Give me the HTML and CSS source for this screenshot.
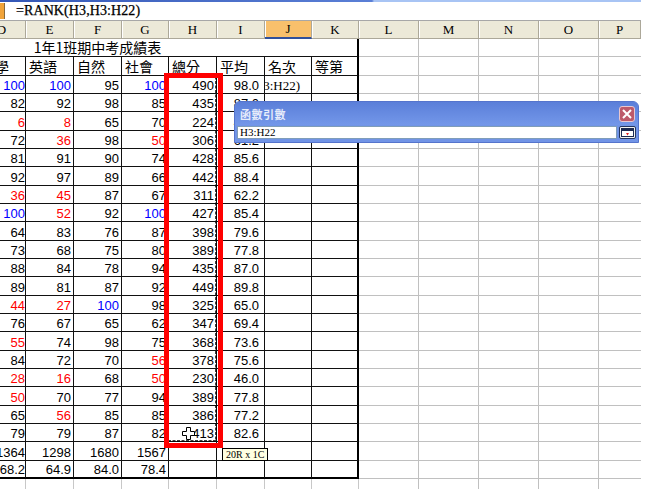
FILE: index.html
```html
<!DOCTYPE html>
<html lang="zh-Hant">
<head>
<meta charset="utf-8">
<title>RANK</title>
<link rel="stylesheet" href="styles.css">
</head>
<body>
<div class="formula-bar"><span class="fx"></span><span class="formula">=RANK(H3,H3:H22)</span></div>
<div class="sheet">
  <div class="colhead">
    <span class="h">D</span><span class="h">E</span><span class="h">F</span><span class="h">G</span><span class="h">H</span><span class="h">I</span><span class="h sel">J</span><span class="h">K</span><span class="h">L</span><span class="h">M</span><span class="h">N</span><span class="h">O</span><span class="h">P</span>
  </div>
  <div class="row"><span class="c title">1年1班期中考成績表</span><span class="c nr"></span><span class="c nr"></span><span class="c k"></span><span class="rest"></span></div>
  <div class="row"><span class="c lab">數學</span><span class="c lab">英語</span><span class="c lab">自然</span><span class="c lab">社會</span><span class="c lab">總分</span><span class="c lab">平均</span><span class="c lab">名次</span><span class="c lab k">等第</span><span class="rest"></span></div>
  <div class="row"><span class="c b">100</span><span class="c b">100</span><span class="c">95</span><span class="c b">100</span><span class="c">490</span><span class="c avg">98.0</span><span class="c edit">H3,H3:H22)</span><span class="c k"></span><span class="rest"></span></div>
  <div class="row"><span class="c">82</span><span class="c">92</span><span class="c">98</span><span class="c">85</span><span class="c">435</span><span class="c avg">87.0</span><span class="c"></span><span class="c k"></span><span class="rest"></span></div>
  <div class="row"><span class="c r">6</span><span class="c r">8</span><span class="c">65</span><span class="c">70</span><span class="c">224</span><span class="c avg">44.8</span><span class="c"></span><span class="c k"></span><span class="rest"></span></div>
  <div class="row"><span class="c">72</span><span class="c r">36</span><span class="c">98</span><span class="c r">50</span><span class="c">306</span><span class="c avg">61.2</span><span class="c"></span><span class="c k"></span><span class="rest"></span></div>
  <div class="row"><span class="c">81</span><span class="c">91</span><span class="c">90</span><span class="c">74</span><span class="c">428</span><span class="c avg">85.6</span><span class="c"></span><span class="c k"></span><span class="rest"></span></div>
  <div class="row"><span class="c">92</span><span class="c">97</span><span class="c">89</span><span class="c">66</span><span class="c">442</span><span class="c avg">88.4</span><span class="c"></span><span class="c k"></span><span class="rest"></span></div>
  <div class="row"><span class="c r">36</span><span class="c r">45</span><span class="c">87</span><span class="c">67</span><span class="c">311</span><span class="c avg">62.2</span><span class="c"></span><span class="c k"></span><span class="rest"></span></div>
  <div class="row"><span class="c b">100</span><span class="c r">52</span><span class="c">92</span><span class="c b">100</span><span class="c">427</span><span class="c avg">85.4</span><span class="c"></span><span class="c k"></span><span class="rest"></span></div>
  <div class="row"><span class="c">64</span><span class="c">83</span><span class="c">76</span><span class="c">87</span><span class="c">398</span><span class="c avg">79.6</span><span class="c"></span><span class="c k"></span><span class="rest"></span></div>
  <div class="row"><span class="c">73</span><span class="c">68</span><span class="c">75</span><span class="c">80</span><span class="c">389</span><span class="c avg">77.8</span><span class="c"></span><span class="c k"></span><span class="rest"></span></div>
  <div class="row"><span class="c">88</span><span class="c">84</span><span class="c">78</span><span class="c">94</span><span class="c">435</span><span class="c avg">87.0</span><span class="c"></span><span class="c k"></span><span class="rest"></span></div>
  <div class="row"><span class="c">89</span><span class="c">81</span><span class="c">87</span><span class="c">92</span><span class="c">449</span><span class="c avg">89.8</span><span class="c"></span><span class="c k"></span><span class="rest"></span></div>
  <div class="row"><span class="c r">44</span><span class="c r">27</span><span class="c b">100</span><span class="c">98</span><span class="c">325</span><span class="c avg">65.0</span><span class="c"></span><span class="c k"></span><span class="rest"></span></div>
  <div class="row"><span class="c">76</span><span class="c">67</span><span class="c">65</span><span class="c">62</span><span class="c">347</span><span class="c avg">69.4</span><span class="c"></span><span class="c k"></span><span class="rest"></span></div>
  <div class="row"><span class="c r">55</span><span class="c">74</span><span class="c">98</span><span class="c">75</span><span class="c">368</span><span class="c avg">73.6</span><span class="c"></span><span class="c k"></span><span class="rest"></span></div>
  <div class="row"><span class="c">84</span><span class="c">72</span><span class="c">70</span><span class="c r">56</span><span class="c">378</span><span class="c avg">75.6</span><span class="c"></span><span class="c k"></span><span class="rest"></span></div>
  <div class="row"><span class="c r">28</span><span class="c r">16</span><span class="c">68</span><span class="c r">50</span><span class="c">230</span><span class="c avg">46.0</span><span class="c"></span><span class="c k"></span><span class="rest"></span></div>
  <div class="row"><span class="c r">50</span><span class="c">70</span><span class="c">77</span><span class="c">94</span><span class="c">389</span><span class="c avg">77.8</span><span class="c"></span><span class="c k"></span><span class="rest"></span></div>
  <div class="row"><span class="c">65</span><span class="c r">56</span><span class="c">85</span><span class="c">85</span><span class="c">386</span><span class="c avg">77.2</span><span class="c"></span><span class="c k"></span><span class="rest"></span></div>
  <div class="row"><span class="c">79</span><span class="c">79</span><span class="c">87</span><span class="c">82</span><span class="c">413</span><span class="c avg">82.6</span><span class="c"></span><span class="c k"></span><span class="rest"></span></div>
  <div class="row"><span class="c">1364</span><span class="c">1298</span><span class="c">1680</span><span class="c">1567</span><span class="c"></span><span class="c"></span><span class="c"></span><span class="c k"></span><span class="rest"></span></div>
  <div class="row last"><span class="c">68.2</span><span class="c">64.9</span><span class="c">84.0</span><span class="c">78.4</span><span class="c"></span><span class="c"></span><span class="c"></span><span class="c k"></span><span class="rest"></span></div>
  <div class="row"><span class="c g"></span><span class="c g"></span><span class="c g"></span><span class="c g"></span><span class="c g"></span><span class="c g"></span><span class="c g"></span><span class="c g"></span><span class="rest"></span></div>
</div>

<svg class="ants" width="52" height="369" viewBox="0 0 52 369"><rect x="1" y="1" width="48" height="366" fill="none" stroke="#000" stroke-width="1.5" stroke-dasharray="3 1.5"/></svg>
<div class="redbox"></div>
<svg class="cursor" width="13" height="13" viewBox="0 0 13 13"><path d="M4.5 0.5H8.5V4.5H12.5V8.5H8.5V12.5H4.5V8.5H0.5V4.5H4.5Z" fill="#fff" stroke="#000" stroke-width="1"/></svg>
<div class="tip">20R x 1C</div>

<div class="dialog">
  <div class="dlg-title">
    <span class="dlg-name">函數引數</span>
    <span class="dlg-close"><svg width="10" height="10" viewBox="0 0 10 10"><path d="M1 1L9 9M9 1L1 9" stroke="#fff" stroke-width="2"/></svg></span>
  </div>
  <div class="dlg-body">
    <span class="dlg-input">H3:H22</span>
    <span class="dlg-btn"><svg width="13" height="9" viewBox="0 0 13 9"><rect x="0.5" y="0.5" width="12" height="8" fill="#fff" stroke="#1c2a52"/><rect x="1" y="1" width="11" height="2" fill="#1c2a52"/><path d="M5 5H8L6.5 7.5Z" fill="#e02020"/></svg></span>
  </div>
</div>
</body>
</html>
```
FILE: styles.css
```css
html, body {
  margin: 0;
  padding: 0;
}
body {
  width: 659px;
  height: 489px;
  overflow: hidden;
  position: relative;
  background: #fff;
  font-family: "Liberation Sans", Arial, sans-serif;
}

/* formula bar */
.formula-bar {
  height: 20px;
  width: 641px;
  box-sizing: border-box;
  display: flex;
  align-items: center;
  background: linear-gradient(to right, #3457b6 0, #5a7fd6 372px, #a8c4f4 374px, #a8c4f4 641px) top left / 100% 2px no-repeat;
}
.fx {
  width: 5px;
  height: 16px;
  margin-top: 2px;
  background: #f0a33a;
  box-shadow: inset -1px 0 #8a6a3a;
}
.formula {
  margin-left: 11px;
  margin-top: 2px;
  font-family: "Liberation Serif", "Times New Roman", serif;
  font-size: 14px;
  color: #000;
  -webkit-text-stroke: 0.25px #000;
  letter-spacing: 0.1px;
}

/* sheet */
.sheet {
  margin-left: -22px;
  width: 663px;
}
.colhead {
  display: grid;
  grid-template-columns: 48px 48px 48px 47px 48px 48px 47px 47px 60px 60px 60px 60px 42px;
  height: 19px;
  border-top: 1px solid #a7a7a7;
  box-sizing: border-box;
}
.h {
  background: #ece9d8;
  border-right: 1px solid #aca899;
  border-bottom: 1px solid #aca899;
  box-shadow: inset 1px 0 #fff;
  font-family: "Liberation Serif", "Times New Roman", serif;
  font-size: 13px;
  line-height: 17px;
  text-align: center;
  color: #000;
}
.h.sel {
  background: #f8c06c;
  border-bottom: 2px solid #31509a;
  line-height: 16px;
}

.row {
  display: grid;
  grid-template-columns: 48px 48px 48px 47px 48px 48px 47px 47px 282px;
  height: 18.33px;
}
.c {
  box-sizing: border-box;
  border-right: 1px solid #111;
  border-bottom: 1px solid #111;
  overflow: hidden;
  white-space: nowrap;
  display: flex;
  align-items: flex-end;
  justify-content: flex-end;
  padding: 0 2px 0 0;
  font-size: 13px;
  line-height: 15px;
  color: #000;
}
.row .c:first-child { padding-right: 0; }
.c.b { color: #0000ff; }
.c.r { color: #ff0000; }
.c.avg { padding-right: 5px; }
.c.k { border-right: 2px solid #000; }
.c.nr { border-right: none; }
.c.g { border-color: #c8c8c8; }
.row.last .c { border-bottom-width: 2px; border-bottom-color: #000; }

.row .c.title {
  grid-column: span 5;
  border-right: none;
  justify-content: center;
  padding: 0 0 1px 0;
  font-family: "Noto Sans CJK TC", "Noto Sans CJK SC", sans-serif;
  font-size: 14px;
  line-height: 16px;
}
.row .c.lab {
  justify-content: flex-start;
  padding: 0 0 1px 3px;
  font-family: "Noto Sans CJK TC", "Noto Sans CJK SC", sans-serif;
  font-size: 14px;
  line-height: 16px;
}
.c.edit {
  padding-right: 11px;
  font-family: "Liberation Serif", "Times New Roman", serif;
  font-size: 13px;
}

.rest {
  box-sizing: border-box;
  border-bottom: 1px solid #c0c0c0;
  background-image: linear-gradient(to right, transparent 59px, #c0c0c0 59px, #c0c0c0 60px);
  background-size: 60px 100%;
  background-repeat: repeat-x;
}

/* overlays */
.ants {
  position: absolute;
  left: 167px;
  top: 74px;
}
.redbox {
  position: absolute;
  left: 164px;
  top: 73px;
  width: 59px;
  height: 375px;
  box-sizing: border-box;
  border: 5px solid #ff0000;
}
.cursor {
  position: absolute;
  left: 182px;
  top: 427px;
}
.tip {
  position: absolute;
  left: 222px;
  top: 448px;
  height: 13px;
  padding: 0 3px;
  box-sizing: border-box;
  border: 1px solid #000;
  background: #ffffe1;
  font-family: "Liberation Serif", "Times New Roman", serif;
  font-size: 10px;
  line-height: 11px;
  color: #000;
}

.dialog {
  position: absolute;
  left: 234px;
  top: 101px;
  width: 405px;
  height: 42px;
  box-sizing: border-box;
  border: 1px solid #5574cc;
  border-radius: 6px 6px 0 0;
  background: #7194e6;
  padding: 0 2px 2px 2px;
  display: flex;
  flex-direction: column;
}
.dlg-title {
  height: 23px;
  display: flex;
  align-items: center;
  justify-content: space-between;
  background: linear-gradient(#5b7fd9, #7397e9);
  border-radius: 5px 5px 0 0;
  margin: 0 -2px;
  padding: 0 3px 0 5px;
}
.dlg-name {
  font-family: "Noto Sans CJK TC", "Noto Sans CJK SC", sans-serif;
  font-weight: bold;
  font-size: 11px;
  color: #e6ecfb;
  letter-spacing: 0.5px;
}
.dlg-close {
  width: 16px;
  height: 16px;
  box-sizing: border-box;
  border: 1px solid #e9c7cf;
  border-radius: 3px;
  background: #bd5a6a;
  display: flex;
  align-items: center;
  justify-content: center;
}
.dlg-body {
  display: flex;
  align-items: center;
  gap: 2px;
  height: 15px;
}
.dlg-input {
  flex: 1;
  height: 13px;
  box-sizing: border-box;
  background: #fff;
  border: 1px solid #7f9db9;
  padding-left: 2px;
  font-family: "Liberation Serif", "Times New Roman", serif;
  font-size: 11px;
  line-height: 11px;
  color: #000;
}
.dlg-btn {
  width: 17px;
  height: 13px;
  box-sizing: border-box;
  border: 1px solid #23355f;
  border-radius: 2px;
  background: #f4f4f0;
  display: flex;
  align-items: center;
  justify-content: center;
}
```
